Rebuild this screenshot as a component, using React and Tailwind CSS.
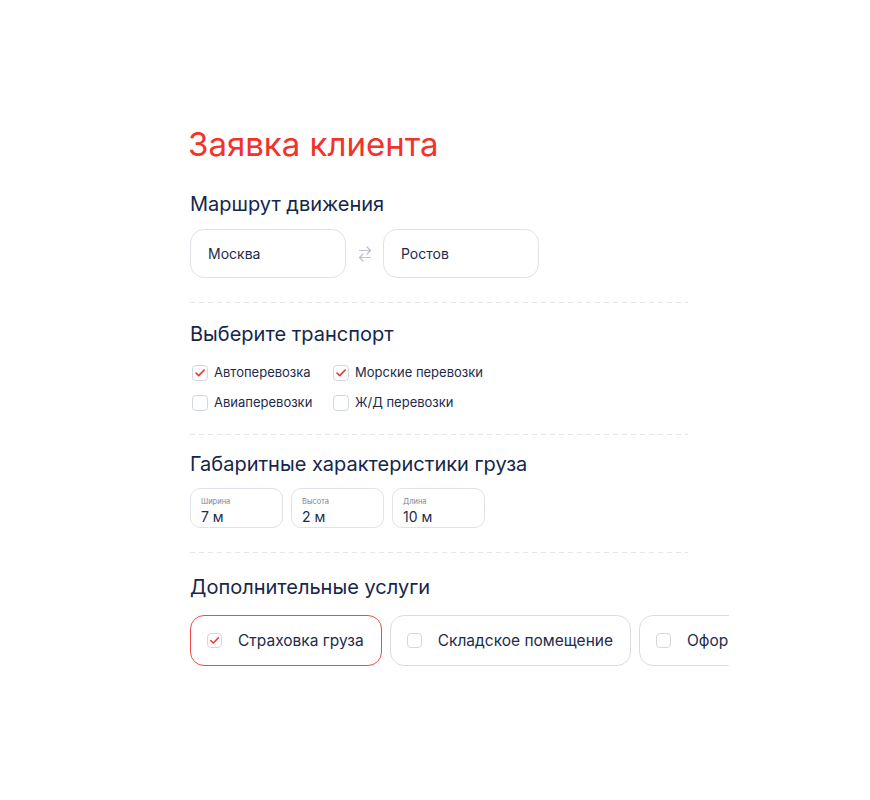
import { useState } from 'react';

const font = { fontFamily: 'Inter, "Noto Sans", sans-serif' };

const Check = ({ on, size = 'w-4 h-4' }) => (
  <span className={`${size} shrink-0 rounded-[4px] border border-[#d3d7df] bg-white flex items-center justify-center`}>
    {on && (
      <svg viewBox="0 0 16 16" className="w-full h-full" fill="none">
        <path d="M3.4 8 6.5 11 12.8 4.6" stroke="#ee3131" strokeWidth="1.8" strokeLinecap="round" strokeLinejoin="round" />
      </svg>
    )}
  </span>
);

const Divider = () => (
  <div className="h-px w-[498px] bg-[repeating-linear-gradient(to_right,#e3e6eb_0_5px,transparent_5px_9px)]" />
);

const Heading = ({ children, className = '' }) => (
  <h2 className={`text-[20px] leading-[24px] text-[#15264b] ${className}`}>{children}</h2>
);

const SwapIcon = () => (
  <svg viewBox="0 0 14 20" className="w-[14px] h-[20px]" fill="none" stroke="#b9c0cc" strokeWidth="1.2" strokeLinecap="round" strokeLinejoin="round">
    <path d="M1.5 6.5h11M9 3l3.5 3.5L9 10" />
    <path d="M12.5 13.5h-11M5 10l-3.5 3.5L5 17" />
  </svg>
);

export default function App() {
  const [transport, setTransport] = useState({ auto: true, sea: true, air: false, rail: false });
  const [services, setServices] = useState([true, false, false]);

  const toggle = key => setTransport(prev => ({ ...prev, [key]: !prev[key] }));

  const transportItems = [
    { key: 'auto', label: 'Автоперевозка' },
    { key: 'sea', label: 'Морские перевозки' },
    { key: 'air', label: 'Авиаперевозки' },
    { key: 'rail', label: 'Ж/Д перевозки' },
  ];

  const dims = [
    { label: 'Ширина', value: '7 м' },
    { label: 'Высота', value: '2 м' },
    { label: 'Длина', value: '10 м' },
  ];

  const serviceItems = ['Страховка груза', 'Складское помещение', 'Оформление документов'];

  return (
    <div className="min-h-screen bg-white pl-[190px] pt-[124px]" style={font}>
      <h1 className="text-[33px] leading-[40px] text-[#f2322b] -ml-[2px]">Заявка клиента</h1>

      <Heading className="mt-[28px]">Маршрут движения</Heading>
      <div className="mt-[13px] flex items-center">
        <div className="w-[156px] h-[49px] rounded-[14px] border border-[#dfe2e8] flex items-center pl-[17px] text-[14px] text-[#1d2b4c]">
          Москва
        </div>
        <div className="w-[37px] flex justify-center">
          <SwapIcon />
        </div>
        <div className="w-[156px] h-[49px] rounded-[14px] border border-[#dfe2e8] flex items-center pl-[17px] text-[14px] text-[#1d2b4c]">
          Ростов
        </div>
      </div>

      <div className="mt-[24px]"><Divider /></div>

      <Heading className="mt-[19px]">Выберите транспорт</Heading>
      <div className="mt-[17px] ml-[2px] grid grid-cols-[141px_auto] gap-y-[10px] w-fit">
        {transportItems.map(item => (
          <label key={item.key} className="h-[20px] flex items-center gap-[6px] cursor-pointer" onClick={() => toggle(item.key)}>
            <Check on={transport[item.key]} />
            <span className="text-[13px] text-[#1d2b4c]">{item.label}</span>
          </label>
        ))}
      </div>

      <div className="mt-[21px]"><Divider /></div>

      <Heading className="mt-[17px]">Габаритные характеристики груза</Heading>
      <div className="mt-[12px] flex gap-[8px]">
        {dims.map(d => (
          <div key={d.label} className="w-[93px] h-[40px] rounded-[10px] border border-[#dfe2e8] pl-[10px] pt-[8px]">
            <div className="text-[7.5px] leading-[10px] text-[#7d8699]">{d.label}</div>
            <div className="mt-[2px] text-[14px] leading-[16px] text-[#1d2b4c]">{d.value}</div>
          </div>
        ))}
      </div>

      <div className="mt-[24px]"><Divider /></div>

      <Heading className="mt-[22px]">Дополнительные услуги</Heading>
      <div className="mt-[16px] w-[539px] overflow-hidden">
        <div className="flex gap-[8px] w-max">
          {serviceItems.map((s, i) => (
            <button
              key={s}
              onClick={() => setServices(prev => prev.map((v, j) => (j === i ? !v : v)))}
              className={`h-[51px] rounded-[14px] border flex items-center gap-[16px] pl-[16px] pr-[17px] ${services[i] ? 'border-[#f04a4a]' : 'border-[#d9dce3]'}`}
            >
              <Check on={services[i]} size="w-[15px] h-[15px]" />
              <span className="text-[15.5px] text-[#1d2b4c] whitespace-nowrap">{s}</span>
            </button>
          ))}
        </div>
      </div>
    </div>
  );
}
